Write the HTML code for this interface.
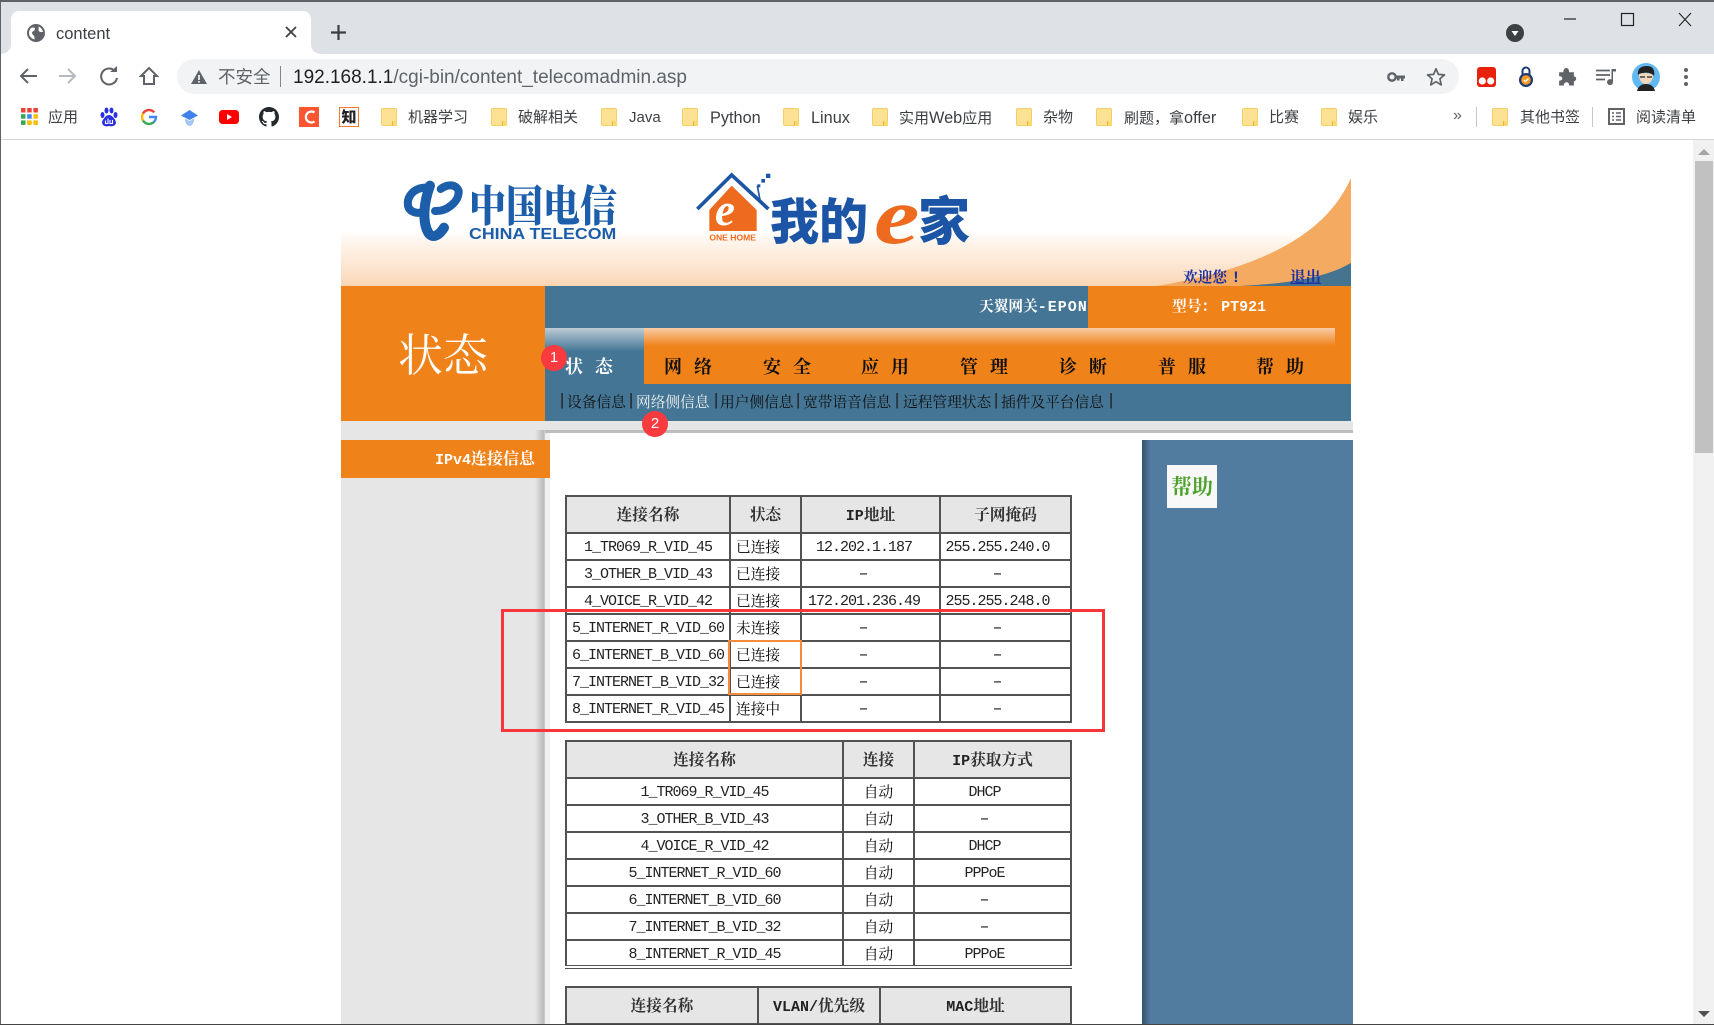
<!DOCTYPE html>
<html lang="zh"><head><meta charset="utf-8"><title>content</title>
<style>
html,body{margin:0;padding:0;width:1714px;height:1025px;overflow:hidden;background:#fff}
body{position:relative;font-family:"Liberation Sans","Noto Sans CJK SC",sans-serif}
.a{position:absolute;white-space:nowrap}
svg.a{overflow:visible}
.bm{font-size:15px;color:#3c4043;line-height:20px;top:108px}
.bm b{font-weight:400;font-size:16.3px}
.f{position:absolute;top:108px;width:16px;height:18px;background:#fde293;border:1px solid #f5cf66;border-radius:2px;box-sizing:border-box}
.f:after{content:"";position:absolute;right:-1px;bottom:-1px;width:4px;height:5px;border-left:1px solid #e9b93e;background:#fbd872}
.s{font-family:"Liberation Serif","Noto Serif CJK SC",serif}
.m{font-family:"Liberation Mono",monospace;font-size:15px}
.nav{top:355px;font-family:"Liberation Serif","Noto Serif CJK SC",serif;font-size:18px;line-height:24px;letter-spacing:12px;color:#111;font-weight:700}
.sub{top:392px;font-family:"Liberation Serif","Noto Serif CJK SC",serif;font-size:14.7px;line-height:22px;color:#111}
.bar{top:391px;width:10px;text-align:center;font-family:"Liberation Mono",monospace;font-size:17px;line-height:22px;color:#222}
table{position:absolute;left:565px;border-collapse:collapse;table-layout:fixed;font-family:"Liberation Serif","Noto Serif CJK SC",serif;font-size:14.7px;color:#000;background:#fff}
td,th{border:2px solid #525252;padding:0;text-align:center;overflow:hidden;white-space:nowrap;font-weight:400}
th{background:#e6e6e6;font-weight:700;color:#333;font-size:15.7px;padding-bottom:2px}
tr{height:27px}
tr.h{height:37px}
i{font-family:"Liberation Mono",monospace;font-style:normal;font-size:15px;letter-spacing:-1px;position:relative;top:1px;color:#222}
th i{font-weight:700;letter-spacing:0;top:0}
u{display:inline-block;text-decoration:none;font-family:"Liberation Mono",monospace;font-size:15px;transform:scaleX(1.7);position:relative;top:1px;color:#222}
.l{text-align:left;padding-left:5px}
.r{padding-right:13px}
.q{padding-right:16px}
</style></head><body>

<!-- browser chrome -->
<div class="a" style="left:0;top:0;width:1714px;height:54px;background:#dee1e6"></div>
<div class="a" style="left:0;top:0;width:1714px;height:2px;background:#5f6368"></div>
<svg class="a" style="left:0;top:11px" width="330" height="44" viewBox="0 0 330 44"><path d="M0 43C7 43 11 39 11 33V9C11 4 14 0 19 0H303C308 0 311 4 311 9V33C311 39 315 43 322 43Z" fill="#fff"/></svg>
<svg class="a" style="left:26px;top:23px" width="20" height="20" viewBox="0 0 20 20"><circle cx="10" cy="10" r="9" fill="#5f6368"/><path d="M5 5C7 4 9 4.500 9 6 9 8 6 8 6 10 6 11.500 8 12 8.500 14L8.500 16.500C5 15.500 3 13 3 10 3 8 4 6 5 5ZM12.500 3.500C15 4.500 16.500 6.500 17 9L15 9C13.500 9 12.500 8 12.500 7 12.500 5.500 13 4.500 12.500 3.500Z" fill="#fff"/></svg>
<div class="a" style="left:56px;top:24px;font-size:16.5px;line-height:20px;color:#3c4043">content</div>
<svg class="a" style="left:285px;top:26px" width="12" height="12" viewBox="0 0 12 12"><path d="M1 1L11 11M11 1L1 11" stroke="#3c4043" stroke-width="1.8"/></svg>
<svg class="a" style="left:331px;top:25px" width="15" height="15" viewBox="0 0 15 15"><path d="M7.5 0V15M0 7.5H15" stroke="#3c4043" stroke-width="2.2"/></svg>
<svg class="a" style="left:1505px;top:23px" width="20" height="20" viewBox="0 0 20 20"><circle cx="10" cy="10" r="9" fill="#3c4043"/><path d="M6.5 8H13.5L10 13Z" fill="#fff"/></svg>
<svg class="a" style="left:1560px;top:10px" width="140" height="20" viewBox="0 0 140 20"><path d="M4 9H16" stroke="#222" stroke-width="1.2"/><rect x="61.5" y="3.5" width="12" height="12" fill="none" stroke="#222" stroke-width="1.2"/><path d="M119 3L131 16M131 3L119 16" stroke="#222" stroke-width="1.1"/></svg>

<div class="a" style="left:177px;top:59px;width:1282px;height:35px;border-radius:18px;background:#f1f3f4"></div>
<svg class="a" style="left:18px;top:66px" width="145" height="20" viewBox="0 0 145 20"><path d="M19 10H3M10 3L3 10 10 17" fill="none" stroke="#5f6368" stroke-width="2"/><path d="M41 10H57M50 3L57 10 50 17" fill="none" stroke="#b6babe" stroke-width="2"/><path d="M97 5A8 8 0 1 0 99 12" fill="none" stroke="#5f6368" stroke-width="2"/><path d="M92 6H99V0Z" fill="#5f6368"/><path d="M123 10L131 2 139 10H136V18H126V10Z" fill="none" stroke="#5f6368" stroke-width="2"/></svg>
<svg class="a" style="left:190px;top:69px" width="18" height="16" viewBox="0 0 18 16"><path d="M9 1L17 15H1Z" fill="#5f6368"/><path d="M8.2 6H9.8V11H8.2ZM8.2 12H9.8V13.6H8.2Z" fill="#fff"/></svg>
<div class="a" style="left:218px;top:65px;font-size:17.5px;line-height:24px;color:#5f6368">不安全</div>
<div class="a" style="left:280px;top:66px;width:1px;height:21px;background:#80868b"></div>
<div class="a" style="left:293px;top:66px;font-size:19px;line-height:24px;color:#5f6368"><span style="color:#202124">192.168.1.1</span>/cgi-bin/content_telecomadmin.asp</div>

<!-- toolbar right icons -->
<svg class="a" style="left:1387px;top:68px" width="18" height="18" viewBox="0 0 18 18"><circle cx="5" cy="9" r="3.7" fill="none" stroke="#5f6368" stroke-width="2.4"/><path d="M8 7.5H18V10.5H16.5V13H14V10.5H12.5V12.5H10V10.5H8Z" fill="#5f6368"/></svg>
<svg class="a" style="left:1426px;top:67px" width="20" height="20" viewBox="0 0 20 20"><path d="M10 1.8L12.4 7.4 18.5 7.9 13.9 11.9 15.3 17.9 10 14.7 4.7 17.9 6.1 11.9 1.5 7.9 7.6 7.4Z" fill="none" stroke="#5f6368" stroke-width="1.7" stroke-linejoin="round"/></svg>
<svg class="a" style="left:1477px;top:67px" width="19" height="20" viewBox="0 0 19 20"><rect width="19" height="20" rx="3" fill="#e8210c"/><circle cx="5.3" cy="14" r="3.6" fill="#fff"/><circle cx="13.7" cy="14" r="3.6" fill="#fff"/></svg>
<svg class="a" style="left:1518px;top:66px" width="16" height="22" viewBox="0 0 16 22"><path d="M4.5 9V5A3.5 3.5 0 0 1 11.5 5V9" fill="none" stroke="#1d3a75" stroke-width="2"/><circle cx="8" cy="14" r="7" fill="#1d3a75"/><circle cx="8" cy="14" r="4.8" fill="#f59d24"/><path d="M5.8 14L7.5 15.6 10.4 12.6" fill="none" stroke="#fff" stroke-width="1.2"/></svg>
<svg class="a" style="left:1557px;top:67px" width="19" height="19" viewBox="0 0 18 18"><path d="M2 5H6C6 2.500 7.200 1 8.800 1 10.400 1 11.500 2.500 11.500 5H16V9C18 9 18.500 10.500 18 12 17.500 13 17 13.500 16 13.500V17.500H11.500C11.500 15.500 10.500 14.500 9 14.500 7.500 14.500 6.500 15.500 6.500 17.500H2V13C4 13 5 12 5 10.800 5 9.500 4 8.800 2 8.800Z" fill="#5f6368"/></svg>
<svg class="a" style="left:1596px;top:68px" width="21" height="18" viewBox="0 0 21 18"><path d="M0 2.500H14M0 7H14M0 11.500H9" stroke="#5f6368" stroke-width="1.7"/><path d="M15.500 1H20V3.500H17V14A3 3 0 1 1 15.500 11.500Z" fill="#5f6368"/></svg>
<svg class="a" style="left:1632px;top:63px" width="28" height="28" viewBox="0 0 28 28"><circle cx="14" cy="14" r="14" fill="#62b8f1"/><path d="M6 12C5 5 10 3 15 3 21 3 23 7 22 13 20 10 15 9 11 10 9 10 7 11 6 12Z" fill="#222"/><path d="M7 11C10 10 16 9 21 12 21 18 18 21 14 21 10 21 7 18 7 11Z" fill="#f3d7bd"/><path d="M8 14H13M15 14H20" stroke="#222" stroke-width="1.300"/><path d="M5 28C6 23 10 21 14 21 18 21 22 23 23 28Z" fill="#222"/></svg>
<svg class="a" style="left:1683px;top:67px" width="6" height="20" viewBox="0 0 6 20"><circle cx="3" cy="3" r="2" fill="#5f6368"/><circle cx="3" cy="10" r="2" fill="#5f6368"/><circle cx="3" cy="17" r="2" fill="#5f6368"/></svg>

<!-- bookmarks -->
<svg class="a" style="left:21px;top:108px" width="17" height="17" viewBox="0 0 17 17"><g fill="#ea4335"><rect width="4.500" height="4.500"/><rect x="6.200" width="4.500" height="4.500"/><rect x="12.400" width="4.500" height="4.500"/></g><rect y="6.200" width="4.500" height="4.500" fill="#34a853"/><rect x="6.200" y="6.200" width="4.500" height="4.500" fill="#4285f4"/><rect x="12.400" y="6.200" width="4.500" height="4.500" fill="#fbbc05"/><rect y="12.400" width="4.500" height="4.500" fill="#34a853"/><rect x="6.200" y="12.400" width="4.500" height="4.500" fill="#fbbc05"/><rect x="12.400" y="12.400" width="4.500" height="4.500" fill="#fbbc05"/></svg>
<div class="a bm" style="left:48px">应用</div>
<svg class="a" style="left:100px;top:107px" width="18" height="20" viewBox="0 0 18 20"><g fill="#2932e1"><ellipse cx="2.500" cy="8" rx="2" ry="3"/><ellipse cx="15.500" cy="8" rx="2" ry="3"/><ellipse cx="6.500" cy="3.500" rx="2" ry="3"/><ellipse cx="11.500" cy="3.500" rx="2" ry="3"/><path d="M9 8C12 8 15 12 16 15 16 19 12 20 9 19 6 20 2 19 2 15 3 12 6 8 9 8Z"/></g><path d="M5.500 13.500V16.500H8V11.500M10 13V16.500H12.500V13" fill="none" stroke="#fff" stroke-width="1.100"/></svg>
<svg class="a" style="left:141px;top:109px" width="16" height="16" viewBox="0 0 16 16"><path d="M13.200 3.300A7 7 0 0 0 2 4.500" fill="none" stroke="#ea4335" stroke-width="2.400"/><path d="M2 4.500A7 7 0 0 0 2 11.500" fill="none" stroke="#fbbc05" stroke-width="2.400"/><path d="M2 11.500A7 7 0 0 0 12.800 13" fill="none" stroke="#34a853" stroke-width="2.400"/><path d="M12.800 13A7 7 0 0 0 15 8H8" fill="none" stroke="#4285f4" stroke-width="2.400"/></svg>
<svg class="a" style="left:181px;top:109px" width="17" height="17" viewBox="0 0 17 17"><path d="M8.500 1L17 6.500 8.500 11 0 6.500Z" fill="#3f83ea"/><path d="M4 9.500L8.500 12 13 9.500V12C12 15 10.500 17 8.500 17 6.500 17 5 15 4 12Z" fill="#a5c6f7"/></svg>
<svg class="a" style="left:219px;top:110px" width="20" height="14" viewBox="0 0 20 14"><rect width="20" height="14" rx="3.500" fill="#f00"/><path d="M8 4L13 7 8 10Z" fill="#fff"/></svg>
<svg class="a" style="left:259px;top:107px" width="20" height="20" viewBox="0 0 16 16"><path fill="#24292e" d="M8 0C3.580 0 0 3.580 0 8c0 3.540 2.290 6.530 5.470 7.590.4.070.55-.17.550-.38 0-.19-.01-.82-.01-1.490-2.010.37-2.530-.49-2.690-.94-.09-.23-.48-.94-.82-1.130-.28-.15-.68-.52-.01-.53.630-.01 1.080.58 1.230.82.720 1.210 1.870.87 2.330.66.070-.52.280-.87.510-1.070-1.780-.2-3.640-.89-3.640-3.950 0-.87.310-1.590.820-2.150-.08-.2-.36-1.020.08-2.120 0 0 .67-.21 2.200.82.640-.18 1.320-.27 2-.27s1.360.09 2 .27c1.530-1.040 2.200-.82 2.200-.82.440 1.100.16 1.920.08 2.120.51.560.82 1.270.82 2.150 0 3.070-1.870 3.750-3.650 3.950.290.250.540.730.540 1.480 0 1.070-.01 1.930-.01 2.200 0 .210.150.460.550.380A8.013 8.013 0 0 0 16 8c0-4.420-3.580-8-8-8z"/></svg>
<div class="a" style="left:299px;top:107px;width:20px;height:20px;background:#fc5531"></div>
<svg class="a" style="left:303px;top:110px" width="13" height="14" viewBox="0 0 13 14"><path d="M11.500 2.500A5.500 5.500 0 1 0 11.500 11.500" fill="none" stroke="#fff" stroke-width="2.200"/></svg>
<div class="a" style="left:339px;top:107px;width:20px;height:20px;box-sizing:border-box;border:1px solid #f37a2a;background:#fff;font-family:'Noto Sans CJK SC',sans-serif;font-size:15px;line-height:17px;text-align:center;font-weight:900;color:#222;overflow:hidden">知</div>
<div class="f" style="left:381px"></div><div class="a bm" style="left:408px">机器学习</div>
<div class="f" style="left:491px"></div><div class="a bm" style="left:518px">破解相关</div>
<div class="f" style="left:601px"></div><div class="a bm" style="left:629px">Java</div>
<div class="f" style="left:682px"></div><div class="a bm" style="left:710px"><b>Python</b></div>
<div class="f" style="left:783px"></div><div class="a bm" style="left:811px"><b>Linux</b></div>
<div class="f" style="left:872px"></div><div class="a bm" style="left:899px">实用<b>Web</b>应用</div>
<div class="f" style="left:1016px"></div><div class="a bm" style="left:1043px">杂物</div>
<div class="f" style="left:1096px"></div><div class="a bm" style="left:1124px">刷题，拿<b>offer</b></div>
<div class="f" style="left:1242px"></div><div class="a bm" style="left:1269px">比赛</div>
<div class="f" style="left:1321px"></div><div class="a bm" style="left:1348px">娱乐</div>
<div class="a bm" style="left:1453px;top:106px;color:#5f6368;font-size:16px">»</div>
<div class="a" style="left:1476px;top:107px;width:1px;height:20px;background:#c5c8cc"></div>
<div class="f" style="left:1492px"></div><div class="a bm" style="left:1520px">其他书签</div>
<div class="a" style="left:1592px;top:107px;width:1px;height:20px;background:#c5c8cc"></div>
<svg class="a" style="left:1608px;top:108px" width="17" height="17" viewBox="0 0 17 17"><rect x="1" y="1" width="15" height="15" fill="none" stroke="#5f6368" stroke-width="2"/><path d="M4 5H6M8 5H13M4 8.500H6M8 8.500H13M4 12H6M8 12H13" stroke="#5f6368" stroke-width="1.400"/></svg>
<div class="a bm" style="left:1636px">阅读清单</div>
<div class="a" style="left:0;top:139px;width:1714px;height:1px;background:#d4d6d9"></div>
<div class="a" style="left:0;top:0;width:1px;height:1025px;background:#5f6368"></div>

<!-- page header -->
<div class="a" style="left:341px;top:140px;width:1010px;height:146px;background:linear-gradient(#fff 0,#fff 62%,#fef3e8 72%,#fce2ca 90%,#f9d5b2 100%)"></div>
<svg class="a" style="left:1100px;top:170px" width="251" height="116" viewBox="1100 170 251 116"><path d="M1351 178C1330 225 1280 265 1157 286H1351Z" fill="#f4aa60"/><path d="M1351 263C1330 275 1300 283 1240 286H1351Z" fill="#44748f"/></svg>

<!-- china telecom logo -->
<svg class="a" style="left:390px;top:165px" width="250" height="90" viewBox="0 0 750 270"><g fill="none" stroke="#1c5ea9" stroke-linecap="round"><path d="M105 68C70 70 50 95 54 122 58 142 85 148 100 140" stroke-width="24"/><path d="M135 138C170 140 208 110 206 78 198 55 170 58 152 72" stroke-width="24"/><path d="M120 62C102 110 95 170 116 205 130 222 148 210 162 188" stroke-width="30"/></g></svg>
<div class="a" style="left:469px;top:173px;font-size:37px;line-height:52px;font-weight:900;color:#1c5ea9;font-family:'Noto Serif CJK SC',serif;transform:scaleY(1.16);transform-origin:0 0">中国电信</div>
<div class="a" style="left:469px;top:226px;font-size:16px;line-height:18px;font-weight:700;color:#1c5ea9;transform:scaleX(1.11);transform-origin:0 0">CHINA TELECOM</div>

<!-- e home logo -->
<svg class="a" style="left:680px;top:165px" width="300" height="100" viewBox="0 0 900 300"><polygon points="88,135 155,62 230,135 230,198 88,198" fill="#ee6a1f"/><path d="M52 132L155 30 265 132" fill="none" stroke="#1c55a5" stroke-width="11"/><path d="M232 62L240 105" stroke="#1c55a5" stroke-width="5"/><rect x="258" y="26" width="13" height="13" fill="#1c55a5"/><rect x="244" y="42" width="11" height="11" fill="#1c55a5"/><rect x="232" y="58" width="9" height="9" fill="#1c55a5"/><text x="105" y="180" font-family="Liberation Serif,serif" font-style="italic" font-weight="700" font-size="135" fill="#fff">e</text><text x="88" y="226" font-family="Liberation Sans,sans-serif" font-weight="700" font-size="24" textLength="140" lengthAdjust="spacingAndGlyphs" fill="#ee6a1f">ONE HOME</text></svg>
<div class="a" style="left:770px;top:186px;font-size:49px;line-height:66px;font-weight:900;color:#1c55a5;font-family:'Noto Sans CJK SC',sans-serif">我的</div>
<div class="a" style="left:874px;top:172px;font-size:80px;line-height:90px;font-weight:700;font-style:italic;color:#ee6a1f;font-family:'Liberation Serif',serif;transform:scaleX(1.28);transform-origin:0 0">e</div>
<div class="a" style="left:918px;top:185px;font-size:52px;line-height:66px;font-weight:900;color:#1c55a5;font-family:'Noto Sans CJK SC',sans-serif">家</div>

<div class="a s" style="left:1183px;top:268px;font-size:14.700px;line-height:20px;font-weight:700;color:#1d32a4">欢迎您<span class="m" style="margin-left:4px;font-size:16px">!</span></div>
<div class="a s" style="left:1290px;top:268px;font-size:15.500px;line-height:20px;font-weight:700;color:#1d32a4;text-decoration:underline">退出</div>

<!-- nav blocks -->
<div class="a" style="left:341px;top:286px;width:204px;height:135px;background:#f0821a"></div>
<div class="a s" style="left:398px;top:325px;font-size:45px;line-height:62px;color:#fff">状态</div>
<div class="a" style="left:545px;top:286px;width:806px;height:135px;background:#447594"></div>
<div class="a" style="left:1088px;top:286px;width:263px;height:42px;background:#f0821a"></div>
<div class="a" style="left:545px;top:328px;width:99px;height:56px;background:linear-gradient(#bccbd6 0,#447594 42%)"></div>
<div class="a" style="left:644px;top:328px;width:707px;height:56px;background:#f0821a"></div>
<div class="a" style="left:644px;top:328px;width:691px;height:18px;background:linear-gradient(#f9cca6 0,#f0821a 100%)"></div>
<div class="a s" style="left:979px;top:297px;font-size:14.700px;line-height:20px;font-weight:700;color:#fff">天翼网关<span class="m" style="letter-spacing:1px">-EPON</span></div>
<div class="a s" style="left:1172px;top:297px;font-size:14.700px;line-height:20px;font-weight:700;color:#fff">型号：<span class="m" style="margin-left:5px">PT921</span></div>

<div class="a nav" style="left:565px;color:#fff">状态</div>
<div class="a nav" style="left:664px">网络</div>
<div class="a nav" style="left:763px">安全</div>
<div class="a nav" style="left:861px">应用</div>
<div class="a nav" style="left:960px">管理</div>
<div class="a nav" style="left:1059px">诊断</div>
<div class="a nav" style="left:1158px">普服</div>
<div class="a nav" style="left:1256px">帮助</div>

<div class="a bar" style="left:557px">|</div><div class="a sub" style="left:567px">设备信息</div>
<div class="a bar" style="left:626px">|</div><div class="a sub" style="left:636px;color:#eee">网络侧信息</div>
<div class="a bar" style="left:711px">|</div><div class="a sub" style="left:720px">用户侧信息</div>
<div class="a bar" style="left:793px">|</div><div class="a sub" style="left:803px">宽带语音信息</div>
<div class="a bar" style="left:892px">|</div><div class="a sub" style="left:903px">远程管理状态</div>
<div class="a bar" style="left:991px">|</div><div class="a sub" style="left:1001px">插件及平台信息</div>
<div class="a bar" style="left:1106px">|</div>

<!-- body -->
<div class="a" style="left:341px;top:421px;width:1012px;height:9px;background:#e6e6e6"></div>
<div class="a" style="left:545px;top:430px;width:808px;height:3px;background:#bdbdbd"></div>
<div class="a" style="left:341px;top:430px;width:204px;height:3px;background:#e6e6e6"></div>
<div class="a" style="left:341px;top:433px;width:194px;height:591px;background:#e6e6e6"></div>
<div class="a" style="left:535px;top:430px;width:10px;height:594px;background:linear-gradient(90deg,#e6e6e6,#bbb 85%,#d0d0d0)"></div>
<div class="a" style="left:545px;top:433px;width:5px;height:591px;background:#f0f0f0"></div>
<div class="a" style="left:341px;top:440px;width:209px;height:38px;background:#f0821a"></div>
<div class="a s" style="left:435px;top:450px;font-size:16px;line-height:20px;font-weight:700;color:#fff"><span class="m">IPv4</span>连接信息</div>
<div class="a" style="left:1142px;top:440px;width:211px;height:584px;background:linear-gradient(90deg,#32536e 0,#527ba0 4%)"></div>
<div class="a s" style="left:1167px;top:465px;width:50px;height:43px;background:#f8f8f8;font-size:21px;line-height:45px;font-weight:700;color:#4ca32a;text-align:center">帮助</div>

<!-- scrollbar -->
<div class="a" style="left:1693px;top:140px;width:21px;height:885px;background:#f1f1f1"></div>
<div class="a" style="left:1695px;top:161px;width:18px;height:292px;background:#c1c1c1"></div>
<svg class="a" style="left:1697px;top:148px" width="14" height="8" viewBox="0 0 14 8"><path d="M7 1L13 7H1Z" fill="#a3a3a3"/></svg>
<svg class="a" style="left:1697px;top:1010px" width="14" height="8" viewBox="0 0 14 8"><path d="M7 7L13 1H1Z" fill="#505050"/></svg>

<!-- table 1 -->
<table style="top:495px;width:507px">
<colgroup><col style="width:164px"><col style="width:71px"><col style="width:139px"><col style="width:131px"></colgroup>
<tr class="h"><th>连接名称</th><th>状态</th><th><i>IP</i>地址</th><th>子网掩码</th></tr>
<tr><td><i>1_TR069_R_VID_45</i></td><td class="l">已连接</td><td class="r"><i>12.202.1.187</i></td><td class="q"><i>255.255.240.0</i></td></tr>
<tr><td><i>3_OTHER_B_VID_43</i></td><td class="l">已连接</td><td class="r"><u>-</u></td><td class="q"><u>-</u></td></tr>
<tr><td><i>4_VOICE_R_VID_42</i></td><td class="l">已连接</td><td class="r"><i>172.201.236.49</i></td><td class="q"><i>255.255.248.0</i></td></tr>
<tr><td><i>5_INTERNET_R_VID_60</i></td><td class="l">未连接</td><td class="r"><u>-</u></td><td class="q"><u>-</u></td></tr>
<tr><td><i>6_INTERNET_B_VID_60</i></td><td class="l">已连接</td><td class="r"><u>-</u></td><td class="q"><u>-</u></td></tr>
<tr><td><i>7_INTERNET_B_VID_32</i></td><td class="l">已连接</td><td class="r"><u>-</u></td><td class="q"><u>-</u></td></tr>
<tr><td><i>8_INTERNET_R_VID_45</i></td><td class="l">连接中</td><td class="r"><u>-</u></td><td class="q"><u>-</u></td></tr>
</table>

<!-- table 2 -->
<table style="top:740px;width:507px;border-bottom:4px double #525252">
<colgroup><col style="width:277px"><col style="width:71px"><col style="width:157px"></colgroup>
<tr class="h"><th>连接名称</th><th>连接</th><th><i>IP</i>获取方式</th></tr>
<tr><td><i>1_TR069_R_VID_45</i></td><td>自动</td><td class="q"><i>DHCP</i></td></tr>
<tr><td><i>3_OTHER_B_VID_43</i></td><td>自动</td><td class="q"><u>-</u></td></tr>
<tr><td><i>4_VOICE_R_VID_42</i></td><td>自动</td><td class="q"><i>DHCP</i></td></tr>
<tr><td><i>5_INTERNET_R_VID_60</i></td><td>自动</td><td class="q"><i>PPPoE</i></td></tr>
<tr><td><i>6_INTERNET_B_VID_60</i></td><td>自动</td><td class="q"><u>-</u></td></tr>
<tr><td><i>7_INTERNET_B_VID_32</i></td><td>自动</td><td class="q"><u>-</u></td></tr>
<tr><td><i>8_INTERNET_R_VID_45</i></td><td>自动</td><td class="q"><i>PPPoE</i></td></tr>
</table>

<!-- table 3 -->
<table style="top:986px;width:507px">
<colgroup><col style="width:192px"><col style="width:122px"><col style="width:191px"></colgroup>
<tr class="h"><th>连接名称</th><th><i>VLAN/</i>优先级</th><th><i>MAC</i>地址</th></tr>
</table>

<!-- annotations -->
<div class="a" style="left:501px;top:609px;width:604px;height:123px;box-sizing:border-box;border:3px solid #f7363c"></div>
<div class="a" style="left:728px;top:640px;width:74px;height:55px;box-sizing:border-box;border:2.500px solid #f68b3c"></div>
<div class="a" style="left:541px;top:345px;width:26px;height:26px;border-radius:50%;background:#f93a3f;color:#fff;font-size:15px;line-height:26px;text-align:center">1</div>
<div class="a" style="left:642px;top:411px;width:26px;height:26px;border-radius:50%;background:#f93a3f;color:#fff;font-size:15px;line-height:26px;text-align:center">2</div>
<div class="a" style="left:0;top:1024px;width:1714px;height:1px;background:#444"></div>
</body></html>
